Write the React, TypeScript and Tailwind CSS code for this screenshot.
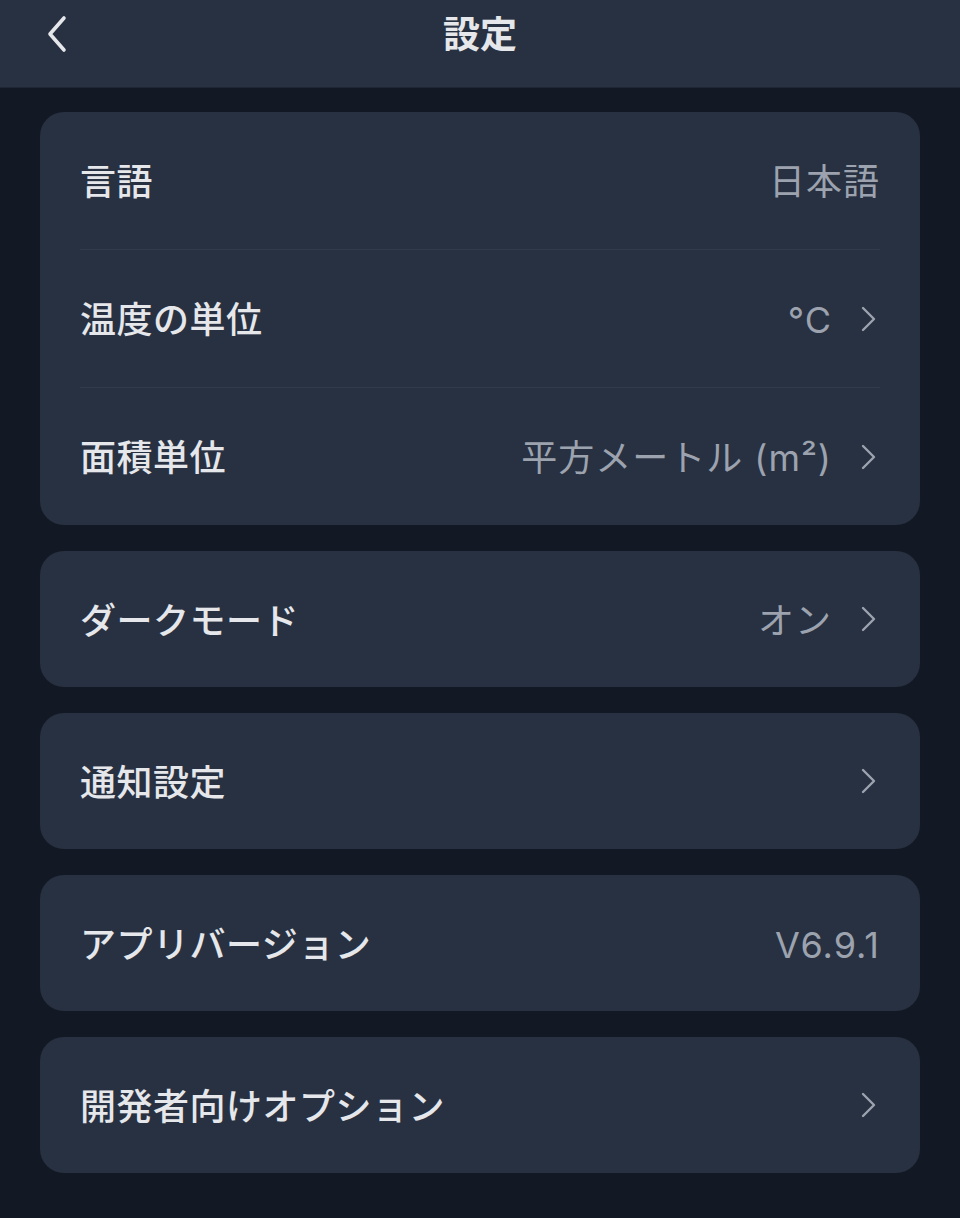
type Row = {
  label: string
  value?: string
  arrow?: boolean
}

const groups: Row[][] = [
  [
    { label: '言語', value: '日本語' },
    { label: '温度の単位', value: '°C', arrow: true },
    { label: '面積単位', value: '平方メートル (m²)', arrow: true },
  ],
  [{ label: 'ダークモード', value: 'オン', arrow: true }],
  [{ label: '通知設定', arrow: true }],
  [{ label: 'アプリバージョン', value: 'V6.9.1' }],
  [{ label: '開発者向けオプション', arrow: true }],
]

function Chevron() {
  return (
    <svg width="24" height="26" viewBox="0 0 24 26" fill="none" className="shrink-0">
      <path d="M7 2 L18 13 L7 24" stroke="#9ca3af" strokeWidth="2.4" strokeLinecap="round" strokeLinejoin="round" />
    </svg>
  )
}

function SettingRow({ row, last, single }: { row: Row; last: boolean; single: boolean }) {
  const cls = !last
    ? 'h-[138px] flex items-center border-b border-[#323b4b]'
    : single
      ? 'h-[136px] flex items-center'
      : 'h-[137px] flex items-center'
  return (
    <div className={cls}>
      <span className="flex-1 text-[36px] font-medium text-[#e5e7eb] tracking-[0.5px] mt-[3px]">{row.label}</span>
      {row.value && <span className="text-[36px] text-[#9ca3af] tracking-[1px] mt-[3px]">{row.value}</span>}
      {row.arrow && (
        <span className="ml-[24px] flex">
          <Chevron />
        </span>
      )}
    </div>
  )
}

export default function App() {
  return (
    <div
      className="min-h-[1218px] bg-[#131924] text-white"
      style={{ fontFamily: 'Inter, "Noto Sans CJK JP", sans-serif' }}
    >
      <header className="h-[88px] bg-[#283141] border-b border-[#1f2735] flex items-center relative">
        <svg
          width="28"
          height="40"
          viewBox="0 0 28 40"
          fill="none"
          className="absolute left-[42px] top-[14px]"
        >
          <path d="M22 4 L8 20 L22 36" stroke="#e5e7eb" strokeWidth="3.6" strokeLinecap="round" strokeLinejoin="round" />
        </svg>
        <h1 className="flex-1 text-center text-[37px] font-bold text-[#e5e7eb] -mt-[18px]">設定</h1>
      </header>
      <main className="px-[40px] pt-[24px] pb-[40px] flex flex-col gap-[26px]">
        {groups.map((g, i) => (
          <section key={i} className="rounded-[24px] bg-[#283141] px-[40px]">
            {g.map((r, j) => (
              <SettingRow key={r.label} row={r} last={j === g.length - 1} single={g.length === 1} />
            ))}
          </section>
        ))}
      </main>
    </div>
  )
}
